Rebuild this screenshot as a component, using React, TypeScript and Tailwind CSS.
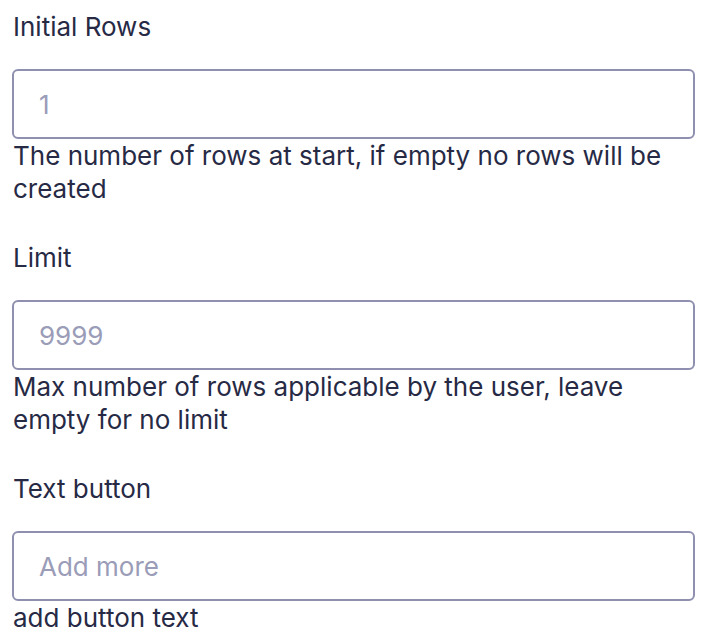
const fields = [
  { label: "Initial Rows", placeholder: "1", help: "The number of rows at start, if empty no rows will be created" },
  { label: "Limit", placeholder: "9999", help: "Max number of rows applicable by the user, leave empty for no limit" },
  { label: "Text button", placeholder: "Add more", help: "add button text" },
];

export default function App() {
  return (
    <div className="flex flex-col pl-3 pr-[21px] pt-[10px] bg-white font-['Inter',sans-serif] text-[26px] leading-[33px] text-[#272a45]">
      {fields.map((f, i) => (
        <div key={i} className="flex flex-col mb-[36px]">
          <label className="block pl-px">{f.label}</label>
          <input
            type="text"
            placeholder={f.placeholder}
            className="mt-[26px] h-[70px] w-full shrink-0 rounded-[6px] border-2 border-[#8f90b0] bg-white px-[25px] text-[26px] placeholder:text-[#9a9cb8] outline-none"
          />
          <p className="pl-px">{f.help}</p>
        </div>
      ))}
    </div>
  );
}
